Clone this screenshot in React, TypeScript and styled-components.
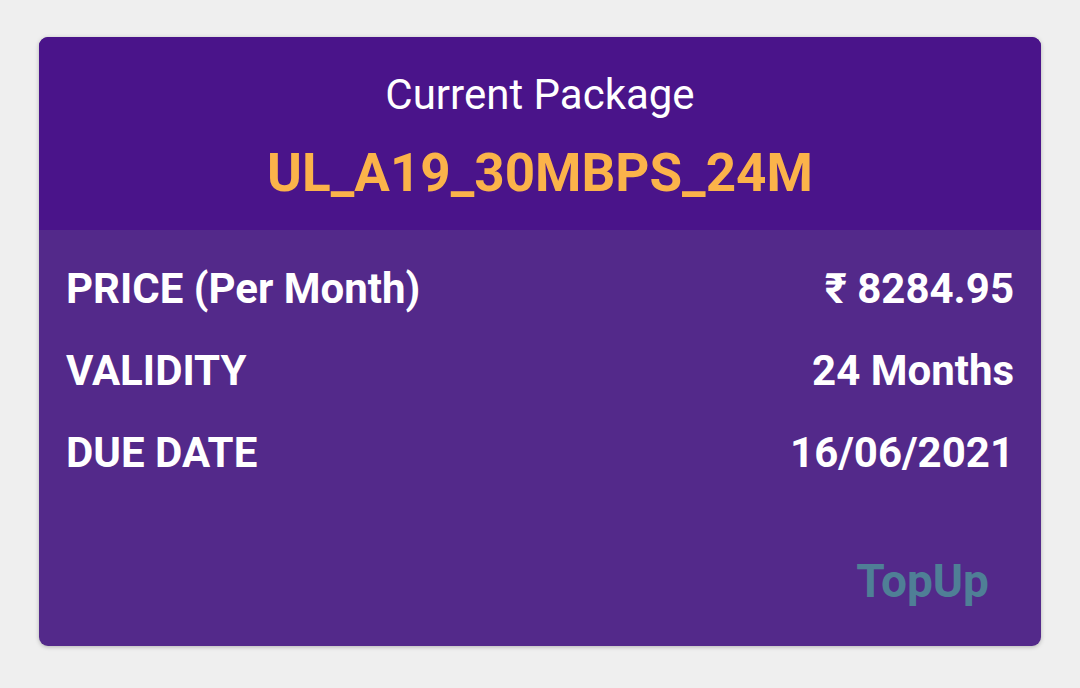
import styled, { createGlobalStyle } from "styled-components";

const GlobalStyle = createGlobalStyle`
  html, body {
    margin: 0;
    padding: 0;
    background: #efefef;
    font-family: Roboto, "Liberation Sans", sans-serif;
  }
`;

const rows = [
  { label: "PRICE (Per Month)", value: "₹ 8284.95" },
  { label: "VALIDITY", value: "24 Months" },
  { label: "DUE DATE", value: "16/06/2021" },
];

export default function App() {
  return (
    <>
      <GlobalStyle />
      <Page>
        <Card>
          <Header>
            <Caption>Current Package</Caption>
            <PackageName>UL_A19_30MBPS_24M</PackageName>
          </Header>
          <Body>
            {rows.map((row) => (
              <Row key={row.label}>
                <span>{row.label}</span>
                <span>{row.value}</span>
              </Row>
            ))}
            <Footer>
              <TopUpButton>TopUp</TopUpButton>
            </Footer>
          </Body>
        </Card>
      </Page>
    </>
  );
}

const Page = styled.div`
  width: 1080px;
  height: 688px;
  padding: 37px 39px 0;
  box-sizing: border-box;
`;

const Card = styled.div`
  height: 609px;
  border-radius: 9px;
  overflow: hidden;
  display: flex;
  flex-direction: column;
  background: #53298a;
  box-shadow: 0 1px 4px rgba(0, 0, 0, 0.25);
`;

const Header = styled.div`
  height: 193px;
  background: #4a148a;
  display: flex;
  flex-direction: column;
  align-items: center;
  padding-top: 34px;
  box-sizing: border-box;
`;

const Caption = styled.div`
  color: #ffffff;
  font-size: 42px;
  line-height: 48px;
`;

const PackageName = styled.div`
  margin-top: 26px;
  color: #fbb34a;
  font-size: 53px;
  font-weight: 700;
  line-height: 56px;
`;

const Body = styled.div`
  flex: 1;
  display: flex;
  flex-direction: column;
  padding: 18px 27px 0 27px;
`;

const Row = styled.div`
  display: flex;
  justify-content: space-between;
  align-items: center;
  height: 82px;
  color: #ffffff;
  font-size: 42px;
  font-weight: 700;
  line-height: 48px;
`;

const Footer = styled.div`
  display: flex;
  justify-content: flex-end;
  padding: 60px 25px 0 0;
`;

const TopUpButton = styled.button`
  background: none;
  border: none;
  padding: 0;
  color: #4f7f96;
  font-family: Roboto, "Liberation Sans", sans-serif;
  font-size: 46px;
  font-weight: 700;
  cursor: pointer;
`;
